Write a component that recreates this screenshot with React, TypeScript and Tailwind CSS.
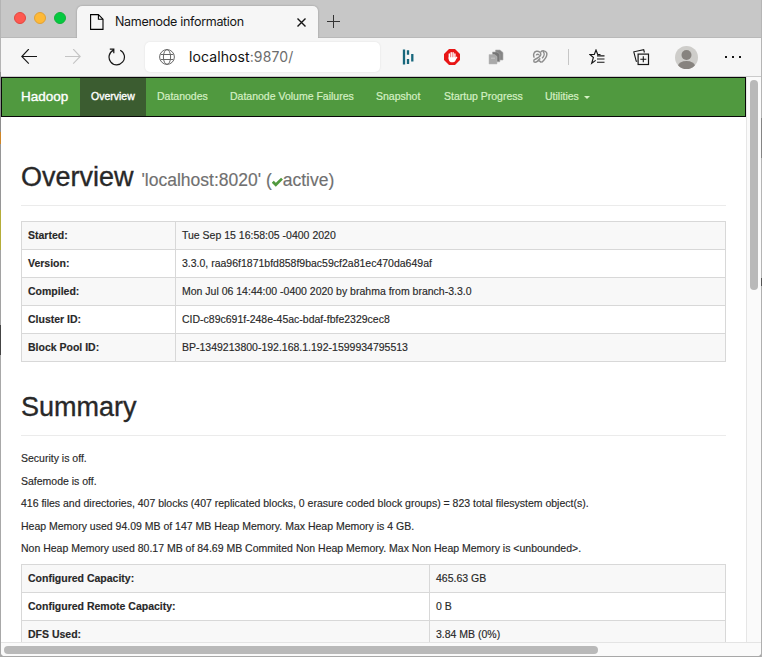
import type { ReactNode } from "react";

type Row = { label: string; value: string };

const overviewRows: Row[] = [
  { label: "Started:", value: "Tue Sep 15 16:58:05 -0400 2020" },
  { label: "Version:", value: "3.3.0, raa96f1871bfd858f9bac59cf2a81ec470da649af" },
  { label: "Compiled:", value: "Mon Jul 06 14:44:00 -0400 2020 by brahma from branch-3.3.0" },
  { label: "Cluster ID:", value: "CID-c89c691f-248e-45ac-bdaf-fbfe2329cec8" },
  { label: "Block Pool ID:", value: "BP-1349213800-192.168.1.192-1599934795513" },
];

const summaryRows: Row[] = [
  { label: "Configured Capacity:", value: "465.63 GB" },
  { label: "Configured Remote Capacity:", value: "0 B" },
  { label: "DFS Used:", value: "3.84 MB (0%)" },
];

const summaryText = [
  "Security is off.",
  "Safemode is off.",
  "416 files and directories, 407 blocks (407 replicated blocks, 0 erasure coded block groups) = 823 total filesystem object(s).",
  "Heap Memory used 94.09 MB of 147 MB Heap Memory. Max Heap Memory is 4 GB.",
  "Non Heap Memory used 80.17 MB of 84.69 MB Commited Non Heap Memory. Max Non Heap Memory is <unbounded>.",
];

const navItems = [
  { label: "Overview", width: "w-[66px]", active: true },
  { label: "Datanodes", width: "w-[73px]" },
  { label: "Datanode Volume Failures", width: "w-[146px]" },
  { label: "Snapshot", width: "w-[68px]" },
  { label: "Startup Progress", width: "w-[101px]" },
  { label: "Utilities", width: "w-[66px]", caret: true },
];

function Svg({ w, h, className = "", children }: { w: number; h: number; className?: string; children: ReactNode }) {
  return (
    <svg width={w} height={h} viewBox={`0 0 ${w} ${h}`} fill="none" stroke="currentColor" className={`shrink-0 ${className}`}>
      {children}
    </svg>
  );
}

function TabStrip() {
  return (
    <div className="flex h-[38px] border-b border-[#b9b9b9] bg-[#c7c7c7]">
      <div className="flex h-9 w-[76px] gap-2 pt-3 pl-[13px]">
        <div className="size-3 rounded-full border border-[#e2463f] bg-[#fe5850]" />
        <div className="size-3 rounded-full border border-[#e0a136] bg-[#feb937]" />
        <div className="size-3 rounded-full border border-[#12b23a] bg-[#05c940]" />
      </div>
      <div className="mt-[6px] flex h-8 w-[241px] items-center rounded-t-[5px] bg-[#f6f6f6] pl-[13px] shadow-[0_0_2px_#8f8f8f] [clip-path:inset(-3px_-3px_0_-3px)]">
        <Svg w={14} h={16} className="text-black">
          <path d="M.6.6h7.8l4.6 4.6v10.2H.6zM8.4.6v4.6H13" strokeWidth="1.1" />
        </Svg>
        <span className="ml-[11px] w-[182px] font-['Inter',sans-serif] text-[12.5px] tracking-[-0.31px] whitespace-nowrap text-[#151515]">Namenode information</span>
        <Svg w={9} h={9} className="text-[#151515]">
          <path d="M.5.5l8 8m0-8l-8 8" strokeWidth="1.4" />
        </Svg>
      </div>
      <Svg w={13} h={13} className="mt-[15px] ml-[9px] text-[#333]">
        <path d="M6.5 0v13M0 6.5h13" />
      </Svg>
    </div>
  );
}

function Toolbar() {
  return (
    <div className="flex h-[39px] items-center border-b border-[#cbcbcb] bg-[#f6f6f6]">
      <Svg w={16} h={16} className="ml-5 text-[#161616]">
        <path d="M16 7.5H1M7.8 0L.8 7.5l7 7.2" strokeWidth="1.1" />
      </Svg>
      <Svg w={16} h={16} className="ml-7 text-[#c4c4c4]">
        <path d="M0 7.5h15M8.2 0l7 7.5-7 7.2" strokeWidth="1.1" />
      </Svg>
      <Svg w={18} h={18} className="ml-[27px] text-[#161616]">
        <path d="M12.2 2.2A7.7 7.7 0 1 1 5.5 2.1M1.8 1.2h4v4" strokeWidth="1.2" />
      </Svg>
      <div className="ml-[19px] flex h-[30px] w-[235px] items-center rounded-[5px] bg-white pl-[14px] shadow-[0_0_2px_#ddd]">
        <Svg w={16} h={16} className="text-[#686868]">
          <circle cx="8" cy="8" r="7.4" />
          <ellipse cx="8" cy="8" rx="3.6" ry="7.4" />
          <path d="M1.6 5.5h12.8M1.6 10.5h12.8" />
        </Svg>
        <span className="mb-px ml-[14px] font-['Inter',sans-serif] text-[14px] tracking-[0.1px] whitespace-nowrap text-[#111]">
          localhost<span className="text-[#6d6d6d]">:9870/</span>
        </span>
      </div>
      <Svg w={12} h={16} className="ml-[22px] text-[#17677c]">
        <path d="M2 .5v15M6 1.3v4.5M6 10v5M10.3 5v7.5" strokeWidth="2.3" />
      </Svg>
      <Svg w={16} h={16} className="ml-[30px]">
        <path d="M5 0h6l5 5v6l-5 5H5l-5-5V5z" fill="#e81616" stroke="none" />
        <path d="M5.3 5v5M7.2 3.6V9M9.1 3.6V9M10.9 5v4.5" stroke="white" strokeWidth="1.4" strokeLinecap="round" />
        <path d="M4.6 8.2h7v2.6c0 1.5-1 2.5-2.6 2.5H7.6c-1.2 0-2-.6-2.6-1.8z" fill="white" stroke="none" />
        <path d="M11 10.6l1.6-2.3" stroke="white" strokeWidth="1.4" strokeLinecap="round" />
      </Svg>
      <Svg w={16} h={16} className="ml-7">
        <path d="M7.5 1h4.5l3 2.5V11H7.5z" fill="#858585" stroke="#b0b0b0" strokeWidth=".6" />
        <path d="M4.5 3H9l2.8 2v7.8H4.5z" fill="#757575" stroke="#aaa" strokeWidth=".6" />
        <path d="M1 5.5h5.5L9 7.5V15H1z" fill="#a9a9a9" stroke="#bbb" strokeWidth=".5" />
        <path d="M3 9.2h4" stroke="#c8c8c8" />
      </Svg>
      <Svg w={16} h={16} className="ml-[28px] text-[#8d8d8d]">
        <path d="M2.3 8.7C1 6.2 1.5 3 4.3 2.3 7 1.7 9.2 3.6 8.7 6c-.6 2.3-3.2 3-5.6 4.3M4.3 6.4c.3-1.6 2.7-1.5 2.6 0M8.8 3c1.3-1.6 4.8-1.7 5.8.7 1.2 3.2-2.2 7.2-5.1 9.8M8.3 9.4l-2 1.7 3 2.2M3.2 10.3c-1.8.4-2 2.9 0 3 1.8 0 2.3-1.6 4-1.7M11.2 2.7c1.6 1.7 1 4.6-1.1 6.6" strokeWidth="1.45" />
      </Svg>
      <div className="ml-5 h-4 w-px bg-[#c6c6c6]" />
      <Svg w={16} h={16} className="ml-[20px] text-[#161616]">
        <path d="M11.5 5.5H8.7L7 1 5.3 5.5H.9l3.5 3-1.7 5.8 4-2.9M8 6.8h7.5M8 10h7.5M8 13.2h7.5" strokeWidth="1.15" />
      </Svg>
      <Svg w={17} h={17} className="ml-7 text-[#161616]">
        <rect x="5.1" y="5.1" width="10.4" height="10.4" strokeWidth="1.2" />
        <path d="M10.3 7.3v6M7.3 10.3h6M4.2 12.4l-1-.3L.8 2.8 10.7.7l.7 2.8" strokeWidth="1.1" />
      </Svg>
      <div className="ml-[25px] size-[23px] shrink-0 overflow-hidden rounded-full bg-[#cecdca]">
        <svg width="23" height="23" viewBox="0 0 23 23" fill="#87837f">
          <circle cx="11.5" cy="9" r="5" />
          <ellipse cx="11.5" cy="20" rx="8.5" ry="5" />
        </svg>
      </div>
      <div className="ml-[27px] flex gap-1">
        <i className="size-[2px] bg-[#161616]" />
        <i className="ml-px size-[2px] bg-[#161616]" />
        <i className="ml-px size-[2px] bg-[#161616]" />
      </div>
    </div>
  );
}

function Navbar() {
  return (
    <nav className="flex h-10 w-[745px] border border-[#080808] bg-[#50993f]">
      <div className="w-[78px] pl-[19px] text-[13.5px] leading-[37px] text-white [-webkit-text-stroke:0.35px_white]">Hadoop</div>
      {navItems.map((n) => (
        <div
          key={n.label}
          className={`${n.width} flex items-center pb-px pl-[11px] whitespace-nowrap ${
            n.active
              ? "bg-[#3b5c30] text-white [-webkit-text-stroke:0.35px_white]"
              : "text-[#d5f0c4] [-webkit-text-stroke:0.2px_#d5f0c4]"
          }`}
        >
          {n.label}
          {n.caret && <span className="mt-px ml-[5px] border-x-[3px] border-t-[3px] border-x-transparent border-t-[#d5f0c4]" />}
        </div>
      ))}
    </nav>
  );
}

function InfoTable({ rows, labelWidth }: { rows: Row[]; labelWidth: string }) {
  return (
    <div className="w-[705px] border-t border-l border-[#d8d8d8]">
      {rows.map((r, i) => (
        <div key={r.label} className={`flex h-7 border-b border-[#d8d8d8] leading-[27px] ${i % 2 ? "bg-white" : "bg-[#f8f8f8]"}`}>
          <div className={`${labelWidth} shrink-0 border-r border-[#d8d8d8] pl-[6px] font-bold`}>{r.label}</div>
          <div className="grow border-r border-[#d8d8d8] pl-[6px]">{r.value}</div>
        </div>
      ))}
    </div>
  );
}

export default function App() {
  return (
    <div className="flex h-[657px] w-[762px] overflow-hidden bg-[#a8a8a8]">
      <div className="flex w-px flex-col">
        <div className="h-[72px] bg-[#b4b4b4]" />
        <div className="h-[60px] bg-[#8e8e8e]" />
        <div className="h-3 bg-[#cf8628]" />
        <div className="h-[66px] bg-[#969696]" />
        <div className="h-10 bg-[#b5ad39]" />
        <div className="h-[75px] bg-[#a2a2a2]" />
        <div className="h-[30px] bg-[#444]" />
      </div>
      <div className="flex h-[656px] w-[760px] flex-col overflow-hidden rounded-b-[4px] bg-white">
        <TabStrip />
        <Toolbar />
        <div className="flex h-[565px]">
          <main className="h-[565px] w-[745px] overflow-hidden bg-white font-['Liberation_Sans',Arial,sans-serif] text-[10.5px] leading-[15px] text-[#282828] [-webkit-text-stroke:0.15px]">
            <Navbar />
            <div className="w-[725px] pl-5">
              <h1 className="flex h-[89px] items-baseline border-b border-[#ebebeb] pt-[45px] text-[27px] leading-[30px] [-webkit-text-stroke:0.35px]">
                Overview
                <small className="ml-2 text-[17.5px] text-[#707070] [-webkit-text-stroke:0.15px]">
                  'localhost:8020' (
                  <svg width="11" height="10" viewBox="0 0 11 10" className="inline-block align-[-1px]">
                    <path d="M.8 4.8l3 3L10 1.6" fill="none" stroke="#50993f" strokeWidth="2.7" />
                  </svg>
                  active)
                </small>
              </h1>
              <div className="pt-[15px]">
                <InfoTable rows={overviewRows} labelWidth="w-[154px]" />
              </div>
              <h2 className="mb-[15px] h-[74px] border-b border-[#ebebeb] pt-[30px] text-[27px] leading-[30px] [-webkit-text-stroke:0.35px]">Summary</h2>
              {summaryText.map((t) => (
                <p key={t} className="mb-[7.5px] whitespace-nowrap">{t}</p>
              ))}
              <InfoTable rows={summaryRows} labelWidth="w-[408px]" />
            </div>
          </main>
          <div className="w-[15px] border-l border-[#e6e6e6] bg-[#fafafa] pt-[3px] pl-[3px]">
            <div className="h-[210px] w-2 rounded-full bg-[#b9b9b9]" />
          </div>
        </div>
        <div className="h-[14px] border-t border-[#e4e4e4] bg-[#fafafa] pt-[3px] pl-[3px]">
          <div className="h-2 w-[594px] rounded-full bg-[#b9b9b9]" />
        </div>
      </div>
      <div className="flex w-px flex-col bg-[#b0b0b0]">
        <div className="h-[118px] bg-[#b5b5b5]" />
        <div className="h-10 bg-[#858585]" />
        <div className="h-[120px] bg-[#b5b5b5]" />
        <div className="h-2 bg-[#555]" />
      </div>
    </div>
  );
}
